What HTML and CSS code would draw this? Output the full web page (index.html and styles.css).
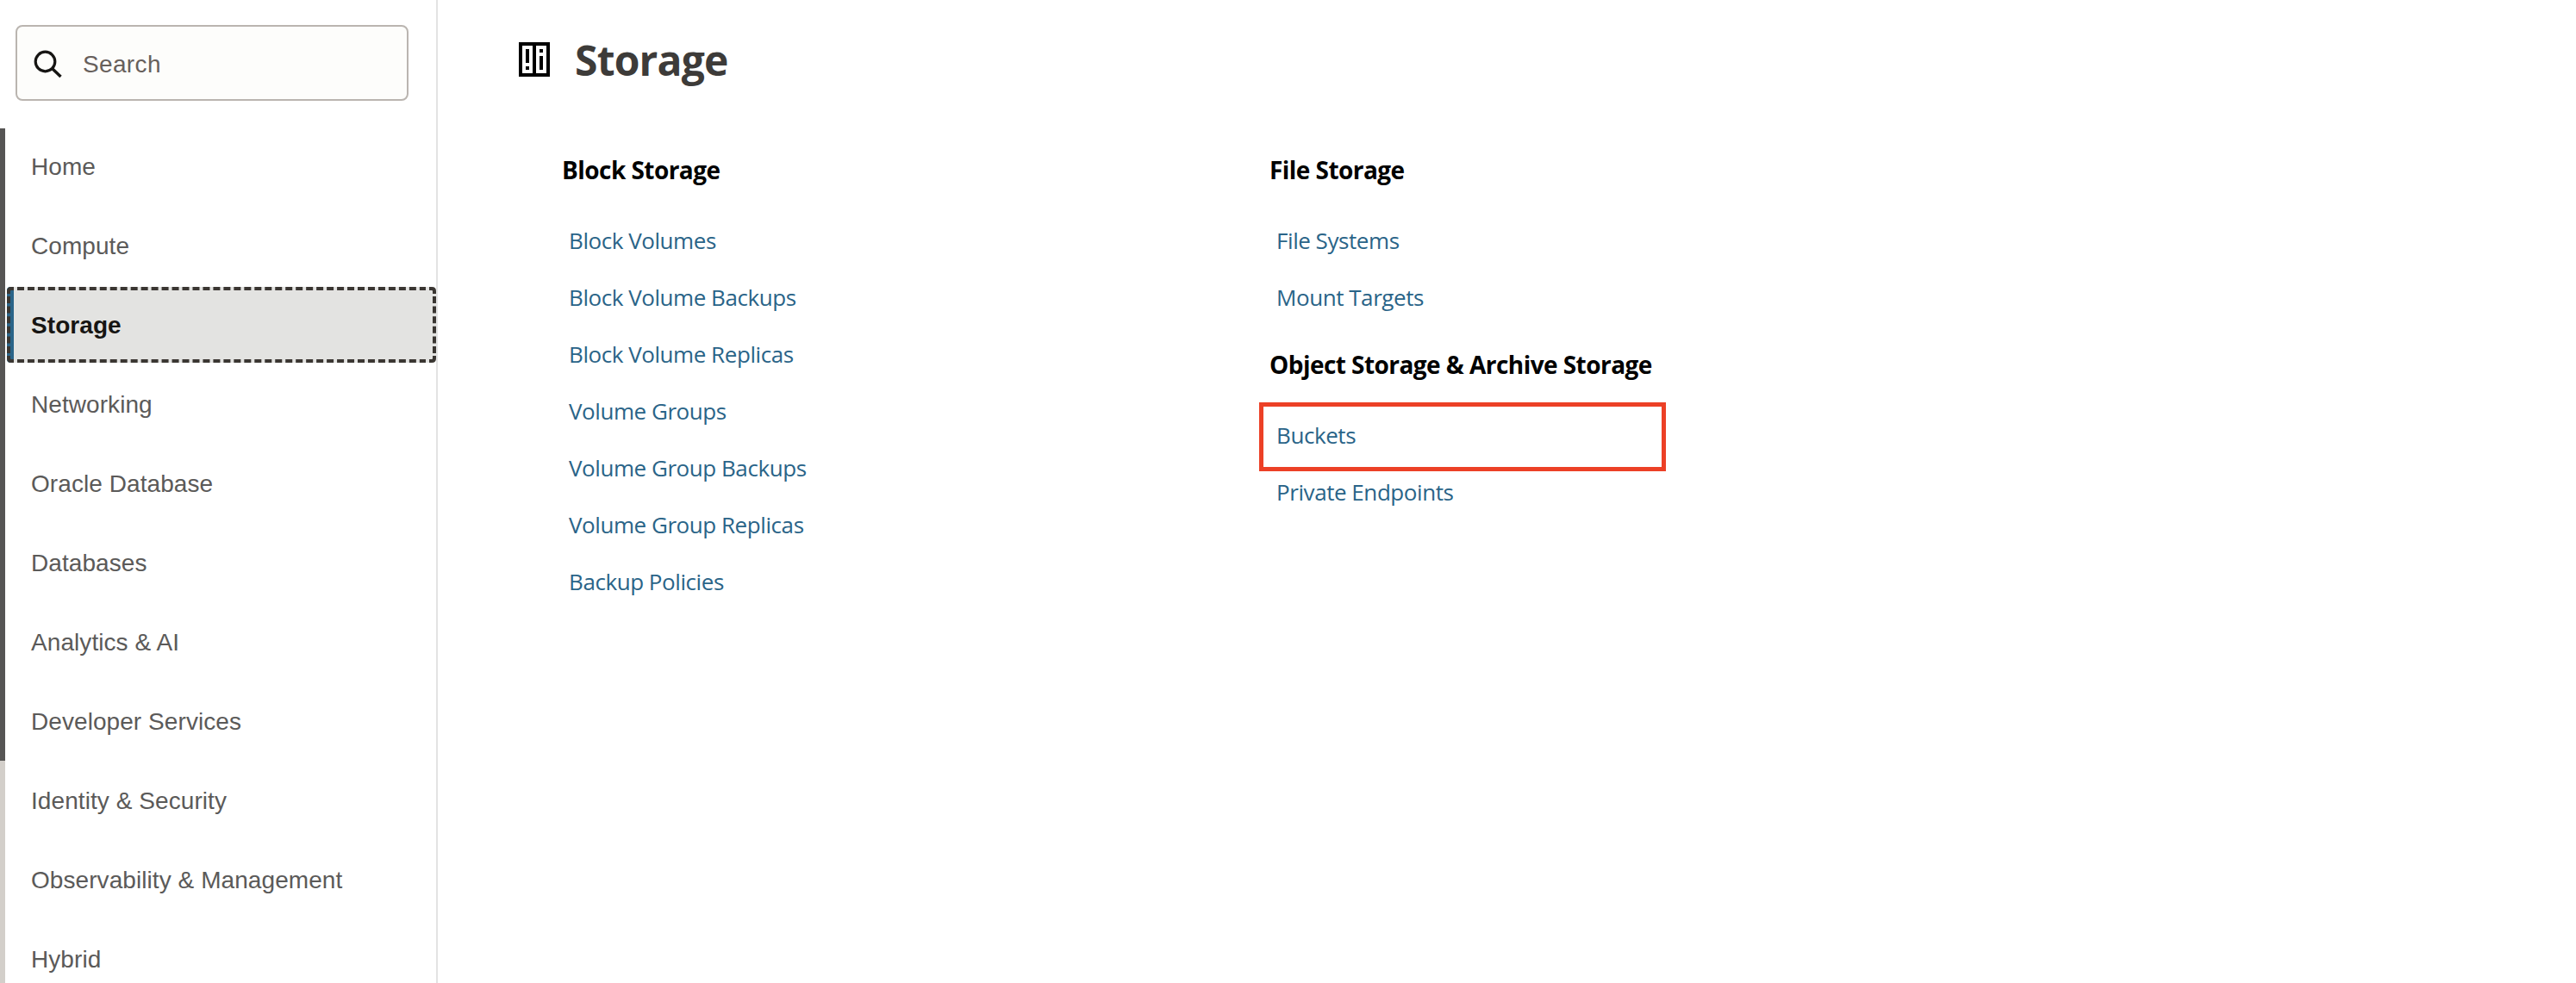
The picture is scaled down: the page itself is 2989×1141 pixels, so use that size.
FILE: index.html
```html
<!DOCTYPE html>
<html lang="en">
<head>
<meta charset="utf-8">
<title>Storage</title>
<link rel="stylesheet" href="styles.css">
</head>
<body>
<div class="layout">
  <aside class="sidebar">
    <label class="search">
      <svg class="search-icon" width="36" height="36" viewBox="0 0 36 36" fill="none" stroke="#161513">
        <circle cx="14.5" cy="14.5" r="11.3" stroke-width="3.2"/>
        <path d="M22.5 22.5 32.5 32" stroke-width="3.4"/>
      </svg>
      <span class="search-text">Search</span>
    </label>
    <div class="nav-wrap">
      <div class="scroll-track"><div class="scroll-thumb"></div></div>
      <nav class="nav">
        <a class="nav-item">Home</a>
        <a class="nav-item">Compute</a>
        <a class="nav-item selected">Storage
          <svg class="focus-ring" width="498" height="88" viewBox="0 0 498 88" fill="none" stroke="#3a3632" stroke-width="4">
            <path d="M12 2H486M12 86H486" stroke-dasharray="8 3.97"/>
            <path d="M2 11V80M496 11V80" stroke-dasharray="8 3.6"/>
            <path d="M2 8V5Q2 2 5 2H8M490 2H493Q496 2 496 5V8M496 80V83Q496 86 493 86H490M8 86H5Q2 86 2 83V80"/>
          </svg>
        </a>
        <a class="nav-item">Networking</a>
        <a class="nav-item">Oracle Database</a>
        <a class="nav-item">Databases</a>
        <a class="nav-item">Analytics &amp; AI</a>
        <a class="nav-item">Developer Services</a>
        <a class="nav-item">Identity &amp; Security</a>
        <a class="nav-item">Observability &amp; Management</a>
        <a class="nav-item">Hybrid</a>
      </nav>
    </div>
  </aside>
  <main class="content">
    <header class="page-header">
      <svg class="page-icon" width="36" height="40" viewBox="0 0 9 10" shape-rendering="crispEdges">
        <path d="M0 0H9V10H0Z"/>
        <path fill="#fff" d="M1 1H4V9H1ZM5 1H8V9H5Z"/>
        <path d="M2 2H3V6H2ZM2 7H3V8H2ZM6 2H7V3H6ZM6 4H7V8H6Z"/>
      </svg>
      <h1 class="page-title">Storage</h1>
    </header>
    <div class="columns">
      <div class="column">
        <section class="group">
          <h2 class="group-title">Block Storage</h2>
          <a class="link">Block Volumes</a>
          <a class="link">Block Volume Backups</a>
          <a class="link">Block Volume Replicas</a>
          <a class="link">Volume Groups</a>
          <a class="link">Volume Group Backups</a>
          <a class="link">Volume Group Replicas</a>
          <a class="link">Backup Policies</a>
        </section>
      </div>
      <div class="column">
        <section class="group">
          <h2 class="group-title">File Storage</h2>
          <a class="link">File Systems</a>
          <a class="link">Mount Targets</a>
        </section>
        <section class="group">
          <h2 class="group-title">Object Storage &amp; Archive Storage</h2>
          <a class="link highlighted">Buckets</a>
          <a class="link">Private Endpoints</a>
        </section>
      </div>
    </div>
  </main>
</div>
</body>
</html>
```
FILE: styles.css
```css
*,
*::after { box-sizing: border-box; }

body {
  margin: 0;
  background: #fff;
  overflow: hidden;
}

.layout {
  display: flex;
  height: 1141px;
  overflow: hidden;
}

.sidebar {
  display: flex;
  flex-direction: column;
  width: 508px;
  flex: none;
  border-right: 2px solid #e3e3e3;
  font: 28px "Liberation Sans", Arial, sans-serif;
  letter-spacing: 0.07px;
  color: #5b5a59;
}

.search {
  display: flex;
  align-items: center;
  flex: none;
  width: 456px;
  height: 88px;
  margin: 29px 0 32px 18px;
  padding-left: 18px;
  border: 2px solid #bab5b0;
  border-radius: 8px;
  background: #fdfdfb;
  color: #67605b;
}

.search-icon { margin-top: 4px; }

.search-text {
  margin: 4px 0 0 22px;
  letter-spacing: 0.35px;
}

.nav-wrap {
  display: flex;
  flex: 1;
  min-height: 0;
}

.scroll-track {
  width: 6px;
  background: #d3cfca;
}

.scroll-thumb {
  height: 734px;
  background: #565554;
}

.nav {
  display: flex;
  flex-direction: column;
  flex: 1;
  gap: 4px;
  padding-left: 2px;
}

.nav-item {
  flex: none;
  height: 88px;
  padding-left: 28px;
  line-height: 90px;
}

.nav-item.selected {
  position: relative;
  padding-left: 20px;
  border-left: 8px solid #2a6488;
  border-radius: 4px;
  background: #e3e3e1;
  color: #161513;
  font-weight: bold;
}

.focus-ring {
  position: absolute;
  top: 0;
  left: -8px;
}

.content {
  flex: 1;
  padding: 38px 0 0 94px;
  font-family: "Open Sans", "Noto Sans", sans-serif;
}

.page-header {
  display: flex;
  align-items: flex-start;
  gap: 29px;
}

.page-icon { margin-top: 11px; }

.page-title {
  margin: 0;
  font-size: 48px;
  line-height: 63px;
  letter-spacing: -0.8px;
  color: #3d3b39;
}

.columns {
  display: grid;
  grid-template-columns: 821px 821px;
  padding: 76px 0 0 50px;
}

.column {
  display: flex;
  flex-direction: column;
  gap: 25px;
}

.group {
  display: flex;
  flex-direction: column;
}

.group-title {
  margin: 0 0 29px;
  font-size: 28px;
  line-height: 40px;
  letter-spacing: -0.55px;
  color: #000;
}

.link {
  padding-left: 8px;
  font-size: 26px;
  line-height: 66px;
  letter-spacing: -0.42px;
  word-spacing: -0.2px;
  color: #2a6488;
}

.highlighted { position: relative; }

.highlighted::after {
  content: "";
  position: absolute;
  top: -5px;
  left: -12px;
  width: 472px;
  height: 80px;
  border: 5px solid #ec4026;
}
```
